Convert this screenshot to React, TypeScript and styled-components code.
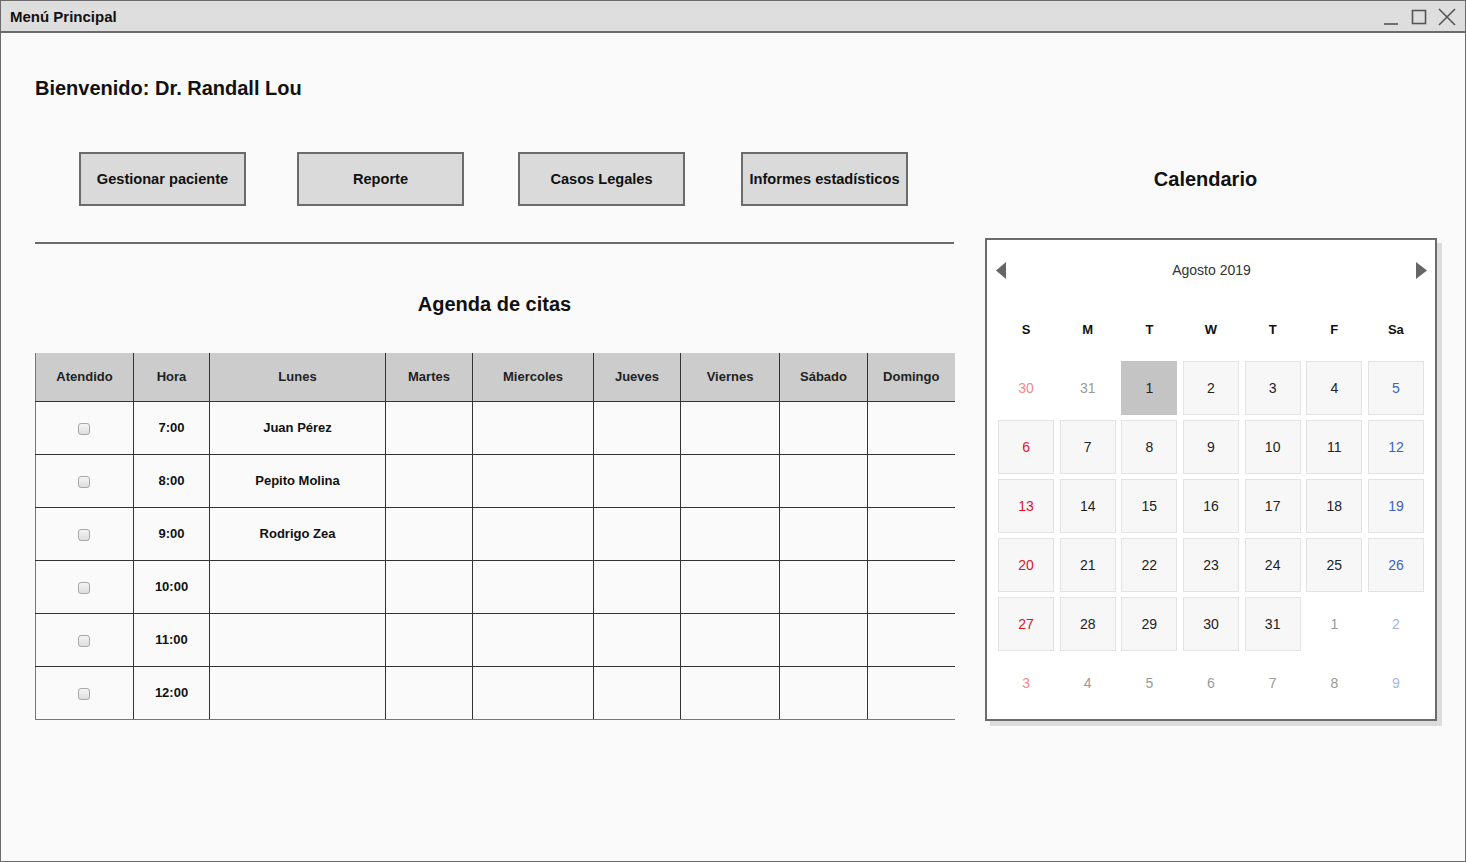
import React from "react";
import styled, { createGlobalStyle } from "styled-components";

const Global = createGlobalStyle`
  html, body { margin: 0; padding: 0; background: #fafafa; }
  body { font-family: "Liberation Sans", Arial, sans-serif; color: #111; }
  * { box-sizing: border-box; }
`;

const Window = styled.div`
  width: 1466px;
  height: 862px;
  border: 1px solid #6b6b6b;
  background: #fafafa;
  display: flex;
  flex-direction: column;
`;

const TitleBar = styled.div`
  height: 32px;
  flex: none;
  background: #dedede;
  border-bottom: 2px solid #6b6b6b;
  display: flex;
  align-items: center;
  justify-content: space-between;
  padding: 0 8px 0 9px;
`;

const Title = styled.div`
  font-size: 15px;
  font-weight: bold;
  color: #111;
`;

const Controls = styled.div`
  display: flex;
  align-items: center;
  gap: 8px;
  padding-top: 2px;
`;

const Content = styled.div`
  flex: 1;
  display: grid;
  grid-template-columns: 919px 457px;
  column-gap: 31px;
  padding: 43px 0 0 34px;
  grid-template-rows: auto auto auto;
  align-content: start;
`;

const Greeting = styled.h1`
  grid-column: 1 / 3;
  margin: 0;
  font-size: 20px;
  line-height: 24px;
  font-weight: bold;
  color: #111;
`;

const ButtonRow = styled.div`
  margin-top: 52px;
  display: flex;
  padding-left: 44px;
`;

const ActionButton = styled.button<{ $ml: number }>`
  width: 167px;
  height: 54px;
  margin-left: ${(p) => p.$ml}px;
  background: #dadada;
  border: 2px solid #6b6b6b;
  font-family: "Liberation Sans", Arial, sans-serif;
  font-size: 14.6px;
  font-weight: bold;
  color: #111;
  padding: 0;
  cursor: pointer;
`;

const CalHeading = styled.h2`
  margin: 52px 0 0 0;
  height: 54px;
  display: flex;
  align-items: center;
  justify-content: center;
  padding-right: 16px;
  font-size: 20px;
  font-weight: bold;
  color: #111;
`;

const LeftCol = styled.div`
  display: flex;
  flex-direction: column;
`;

const Divider = styled.hr`
  margin: 36px 0 0 0;
  border: none;
  height: 2px;
  background: #6b6b6b;
`;

const SectionTitle = styled.h2`
  margin: 48px 0 0 0;
  text-align: center;
  font-size: 20px;
  line-height: 24px;
  font-weight: bold;
  color: #111;
`;

const Table = styled.table`
  margin-top: 37px;
  width: 919px;
  border-collapse: collapse;
  table-layout: fixed;
  font-size: 13px;
  border-left: 1px solid #777;
  border-bottom: 1px solid #777;
`;

const Th = styled.th`
  height: 48px;
  background: #cccccc;
  border: 1px solid #333;
  border-top: none;
  font-weight: bold;
  color: #222;
  text-align: center;
  padding: 0;
  &:first-child { border-left-color: #777; }
  &:last-child { border-right: none; }
`;

const Td = styled.td`
  height: 53px;
  border: 1px solid #333;
  text-align: center;
  font-weight: bold;
  color: #111;
  padding: 0;
  &:first-child { border-left-color: #777; }
  &:last-child { border-right: none; }
  tr:last-child > & { border-bottom-color: #777; }
`;

const Check = styled.span`
  display: inline-block;
  width: 12px;
  height: 12px;
  margin-left: -2px;
  border: 1px solid #a8a8a8;
  border-radius: 3px;
  background: linear-gradient(#f4f4f4, #dedede);
  vertical-align: middle;
`;

const CalBox = styled.div`
  margin-top: 32px;
  width: 452px;
  height: 483px;
  background: #fff;
  border: 2px solid #6b6b6b;
  box-shadow: 5px 5px 0 #dcdcdc;
  padding: 0 11px;
  display: flex;
  flex-direction: column;
`;

const CalHeader = styled.div`
  height: 58px;
  display: flex;
  align-items: center;
  justify-content: space-between;
  padding-top: 2px;
  margin: 0 -3px 0 -2px;
`;

const MonthLabel = styled.div`
  font-size: 14px;
  color: #333;
`;

const WeekRow = styled.div`
  height: 63px;
  display: grid;
  grid-template-columns: repeat(7, 1fr);
  column-gap: 5.5px;
  align-items: center;
`;

const WeekDay = styled.div`
  text-align: center;
  font-size: 13px;
  font-weight: bold;
  color: #111;
`;

const DayGrid = styled.div`
  display: grid;
  grid-template-columns: repeat(7, 1fr);
  grid-auto-rows: 54px;
  gap: 5px 5.5px;
`;

type Tone = "normal" | "sun" | "sat";

const toneColor = (tone: Tone, out: boolean) => {
  if (tone === "sun") return out ? "#f08a8a" : "#e0141e";
  if (tone === "sat") return out ? "#a3b6e3" : "#3b63c4";
  return out ? "#999" : "#222";
};

const Day = styled.div<{ $tone: Tone; $out: boolean; $sel: boolean }>`
  display: flex;
  align-items: center;
  justify-content: center;
  font-size: 14px;
  color: ${(p) => toneColor(p.$tone, p.$out)};
  background: ${(p) => (p.$out ? "transparent" : p.$sel ? "#c4c4c4" : "#f7f7f7")};
  border: 1px solid ${(p) => (p.$out ? "transparent" : p.$sel ? "#c4c4c4" : "#e3e3e3")};
`;

const Arrow = ({ dir }: { dir: "left" | "right" }) => (
  <svg width="11" height="17" viewBox="0 0 11 17">
    {dir === "left" ? (
      <polygon points="10,0 10,17 0,8.5" fill="#666" />
    ) : (
      <polygon points="0,0 0,17 11,8.5" fill="#666" />
    )}
  </svg>
);

const hours = ["7:00", "8:00", "9:00", "10:00", "11:00", "12:00"];
const names = ["Juan Pérez", "Pepito Molina", "Rodrigo Zea", "", "", ""];
const cols = [
  { label: "Atendido", w: 98 },
  { label: "Hora", w: 76 },
  { label: "Lunes", w: 176 },
  { label: "Martes", w: 87 },
  { label: "Miercoles", w: 121 },
  { label: "Jueves", w: 87 },
  { label: "Viernes", w: 99 },
  { label: "Sábado", w: 88 },
  { label: "Domingo", w: 87 },
];

const weekdays = ["S", "M", "T", "W", "T", "F", "Sa"];

const days: { n: number; out: boolean }[] = [
  { n: 30, out: true },
  { n: 31, out: true },
  ...Array.from({ length: 31 }, (_, i) => ({ n: i + 1, out: false })),
  ...Array.from({ length: 9 }, (_, i) => ({ n: i + 1, out: true })),
];

export default function App() {
  return (
    <>
      <Global />
      <Window>
        <TitleBar>
          <Title>Menú Principal</Title>
          <Controls>
            <svg width="20" height="20" viewBox="0 0 20 20">
              <line x1="3" y1="17" x2="17" y2="17" stroke="#555" strokeWidth="1.6" />
            </svg>
            <svg width="20" height="20" viewBox="0 0 20 20">
              <rect x="3.5" y="3.5" width="13" height="13" fill="none" stroke="#555" strokeWidth="1.6" />
            </svg>
            <svg width="20" height="20" viewBox="0 0 20 20">
              <path d="M2 2 L18 18 M18 2 L2 18" stroke="#555" strokeWidth="1.6" />
            </svg>
          </Controls>
        </TitleBar>
        <Content>
          <Greeting>Bienvenido: Dr. Randall Lou</Greeting>
          <ButtonRow>
            <ActionButton $ml={0}>Gestionar paciente</ActionButton>
            <ActionButton $ml={51}>Reporte</ActionButton>
            <ActionButton $ml={54}>Casos Legales</ActionButton>
            <ActionButton $ml={56}>Informes estadísticos</ActionButton>
          </ButtonRow>
          <CalHeading>Calendario</CalHeading>
          <LeftCol>
            <Divider />
            <SectionTitle>Agenda de citas</SectionTitle>
            <Table>
              <colgroup>
                {cols.map((c) => (
                  <col key={c.label} style={{ width: c.w }} />
                ))}
              </colgroup>
              <thead>
                <tr>
                  {cols.map((c) => (
                    <Th key={c.label}>{c.label}</Th>
                  ))}
                </tr>
              </thead>
              <tbody>
                {hours.map((h, i) => (
                  <tr key={h}>
                    <Td>
                      <Check />
                    </Td>
                    <Td>{h}</Td>
                    <Td>{names[i]}</Td>
                    <Td />
                    <Td />
                    <Td />
                    <Td />
                    <Td />
                    <Td />
                  </tr>
                ))}
              </tbody>
            </Table>
          </LeftCol>
          <div>
            <CalBox>
              <CalHeader>
                <Arrow dir="left" />
                <MonthLabel>Agosto 2019</MonthLabel>
                <Arrow dir="right" />
              </CalHeader>
              <WeekRow>
                {weekdays.map((w, i) => (
                  <WeekDay key={i}>{w}</WeekDay>
                ))}
              </WeekRow>
              <DayGrid>
                {days.map((d, i) => {
                  const col = i % 7;
                  const tone: Tone = col === 0 ? "sun" : col === 6 ? "sat" : "normal";
                  return (
                    <Day key={i} $tone={tone} $out={d.out} $sel={!d.out && d.n === 1}>
                      {d.n}
                    </Day>
                  );
                })}
              </DayGrid>
            </CalBox>
          </div>
        </Content>
      </Window>
    </>
  );
}
